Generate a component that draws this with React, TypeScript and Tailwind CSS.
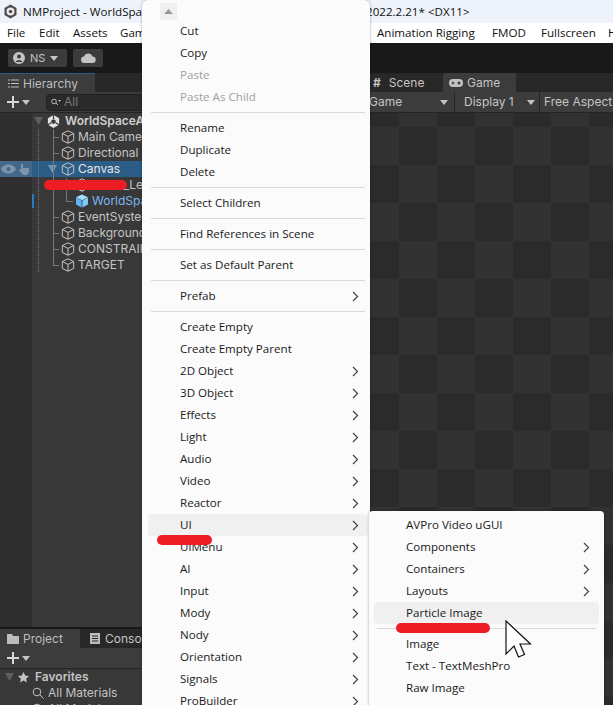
import React from "react";

const Chevron = ({ className = "" }: { className?: string }) => (
  <svg width="7" height="11" viewBox="0 0 7 11" className={className} fill="none" stroke="#444" strokeWidth="1.2">
    <path d="M1 1l4.5 4.5L1 10" />
  </svg>
);

const Cube = ({ blue = false }: { blue?: boolean }) =>
  blue ? (
    <svg width="14" height="14" viewBox="0 0 14 14" className="shrink-0">
      <path d="M7 .5l6 2.8L7 6.2 1 3.3z" fill="#a8dcff" />
      <path d="M1 3.6l5.6 2.9v7L1 10.6z" fill="#5cb8f4" />
      <path d="M13 3.6L7.4 6.5v7l5.6-2.9z" fill="#7ccbfb" />
    </svg>
  ) : (
    <svg width="14" height="14" viewBox="0 0 14 14" className="shrink-0" fill="none" stroke="#c2c2c2" strokeWidth="1">
      <path d="M7 .8l5.7 2.7v7L7 13.2l-5.7-2.7v-7z" />
      <path d="M1.300 3.500L7 6.400l5.700-2.900M7 6.400v6.800" />
    </svg>
  );

const Tri = ({ c = "#5f5f5f" }: { c?: string }) => (
  <svg width="9" height="8" viewBox="0 0 9 8" className="shrink-0">
    <path d="M0 0h9L4.500 8z" fill={c} />
  </svg>
);

const Caret = () => (
  <svg width="8" height="5" viewBox="0 0 8 5" className="shrink-0">
    <path d="M0 0h8L4 5z" fill="#c4c4c4" />
  </svg>
);

const Plus = () => (
  <svg width="12" height="12" viewBox="0 0 12 12" className="shrink-0">
    <path d="M5 0h2v5h5v2H7v5H5V7H0V5h5z" fill="#d8d8d8" />
  </svg>
);

const UnityBall = () => (
  <svg width="13" height="13" viewBox="0 0 13 13" className="shrink-0">
    <path d="M6.500 0l5.600 3.200v6.600L6.500 13 .9 9.800V3.200z" fill="#e2e2e2" />
    <path d="M6.500 4.200l2.200 1.200v2.400L6.500 9 4.300 7.800V5.400z" fill="#3a3a3a" />
    <path d="M6.500 0v4.200M.9 9.800l3.400-2M12.100 9.800l-3.400-2" stroke="#3a3a3a" strokeWidth="1.200" />
  </svg>
);

type Item = { t?: string; sub?: boolean; off?: boolean; hl?: boolean; sep?: boolean };

const mainItems: Item[] = [
  { t: "Cut" }, { t: "Copy" }, { t: "Paste", off: true }, { t: "Paste As Child", off: true }, { sep: true },
  { t: "Rename" }, { t: "Duplicate" }, { t: "Delete" }, { sep: true },
  { t: "Select Children" }, { sep: true },
  { t: "Find References in Scene" }, { sep: true },
  { t: "Set as Default Parent" }, { sep: true },
  { t: "Prefab", sub: true }, { sep: true },
  { t: "Create Empty" }, { t: "Create Empty Parent" },
  { t: "2D Object", sub: true }, { t: "3D Object", sub: true }, { t: "Effects", sub: true }, { t: "Light", sub: true },
  { t: "Audio", sub: true }, { t: "Video", sub: true }, { t: "Reactor", sub: true },
  { t: "UI", sub: true, hl: true }, { t: "UiMenu", sub: true }, { t: "AI", sub: true }, { t: "Input", sub: true },
  { t: "Mody", sub: true }, { t: "Nody", sub: true }, { t: "Orientation", sub: true }, { t: "Signals", sub: true },
  { t: "ProBuilder", sub: true },
];

const subItems: Item[] = [
  { t: "AVPro Video uGUI" }, { t: "Components", sub: true }, { t: "Containers", sub: true }, { t: "Layouts", sub: true },
  { t: "Particle Image", hl: true }, { sep: true },
  { t: "Image" }, { t: "Text - TextMeshPro" }, { t: "Raw Image" }, { t: "Toggle" },
];

const MenuRows = ({ items, textPad, arrowPad }: { items: Item[]; textPad: string; arrowPad: string }) => (
  <>
    {items.map((it, i) =>
      it.sep ? (
        <div key={i} className="h-[9px] shrink-0 flex items-center mx-[3px]">
          <div className="h-px w-full bg-[#d9d9d9]" />
        </div>
      ) : (
        <div key={i} className={`h-[22px] shrink-0 flex items-center justify-between rounded-[4px] ${textPad} ${arrowPad} ${it.hl ? "bg-[#f0f0f0]" : ""}`}>
          <span className={it.off ? "text-[#a0a0a0]" : "text-[#1a1a1a]"}>{it.t}</span>
          {it.sub && <Chevron />}
        </div>
      )
    )}
  </>
);

const tree: { t: string; pad: string; hl?: boolean; blue?: boolean; l2?: boolean }[] = [
  { t: "Main Camera", pad: "pl-[61px]" },
  { t: "Directional Light", pad: "pl-[61px]" },
  { t: "Canvas", pad: "pl-[61px]", hl: true },
  { t: "Panel_Legacy", pad: "pl-[75px]", l2: true },
  { t: "WorldSpace", pad: "pl-[75px]", blue: true, l2: true },
  { t: "EventSystem", pad: "pl-[61px]" },
  { t: "Background", pad: "pl-[61px]" },
  { t: "CONSTRAINT", pad: "pl-[61px]" },
  { t: "TARGET", pad: "pl-[61px]" },
];

const Mark = ({ className }: { className: string }) => (
  <div className={`absolute rounded-full bg-[#ee1c25] ${className}`} />
);

export default function App() {
  return (
    <div className="relative w-[613px] h-[705px] overflow-hidden bg-[#191919] text-[11.6px] font-['Open_Sans','Liberation_Sans',sans-serif]">
      {/* title bar */}
      <div className="h-[23px] bg-[#eef3fb] flex items-center pl-[3px] text-[11.6px] text-[#111] whitespace-nowrap">
        <svg width="15" height="15" viewBox="0 0 15 15" className="shrink-0 mr-[5px]">
          <path d="M7.500 .5l6 3.400v7.200l-6 3.400-6-3.400V3.900z" fill="#4a4a4a" />
          <circle cx="7.500" cy="7.500" r="4" fill="#e8e8e8" />
          <circle cx="7.500" cy="7.500" r="1.600" fill="#3a3a3a" />
        </svg>
        <span className="w-[343px]">NMProject - WorldSpace</span>
        <span>2022.2.21* &lt;DX11&gt;</span>
      </div>
      {/* menu bar */}
      <div className="h-[20px] bg-white flex items-center overflow-hidden text-[11.6px] text-[#111] whitespace-nowrap">
        <span className="ml-[7px] w-[32px] shrink-0">File</span>
        <span className="w-[34px] shrink-0">Edit</span>
        <span className="w-[47px] shrink-0">Assets</span>
        <span className="w-[257px] shrink-0">GameObject</span>
        <span className="w-[115px] shrink-0">Animation Rigging</span>
        <span className="w-[49px] shrink-0">FMOD</span>
        <span className="w-[67px] shrink-0">Fullscreen</span>
        <span className="shrink-0">Help</span>
      </div>
      {/* toolbar */}
      <div className="h-[30px] bg-[#191919] flex items-center pl-[8px] gap-[6px] font-['Inter',sans-serif]">
        <div className="w-[59px] h-[18px] bg-[#3c3c3c] rounded-[2px] flex items-center pl-[5px] gap-[5px] text-[#c4c4c4]">
          <svg width="12" height="12" viewBox="0 0 12 12" className="shrink-0">
            <circle cx="6" cy="6" r="6" fill="#c4c4c4" />
            <circle cx="6" cy="4.500" r="2" fill="#3c3c3c" />
            <path d="M2.500 10c.5-2.400 6.500-2.400 7 0z" fill="#3c3c3c" />
          </svg>
          <span className="text-[11px]">NS</span>
          <Caret />
        </div>
        <div className="w-[30px] h-[18px] bg-[#3c3c3c] rounded-[2px] flex items-center justify-center">
          <svg width="15" height="10" viewBox="0 0 15 10"><path d="M3.500 10a3.200 3.200 0 0 1-.4-6.400A4.400 4.400 0 0 1 11.500 3.600 3.200 3.200 0 0 1 11.500 10z" fill="#c4c4c4" /></svg>
        </div>
      </div>
      {/* panels */}
      <div className="flex h-[632px] font-['Inter',sans-serif] text-[12px] text-[#c4c4c4]">
        {/* left column */}
        <div className="w-[358px] shrink-0 flex flex-col mr-[2px]">
          <div className="h-[19px] shrink-0 bg-[#282828] flex items-end">
            <div className="w-[95px] h-[19px] bg-[#3c3c3c] border-t border-[#2c5d87] flex items-center pl-[8px] pt-[1px] gap-[4px] text-[#bdbdbd]">
              <svg width="11" height="9" viewBox="0 0 11 9" stroke="#bdbdbd" strokeWidth="1" fill="none"><path d="M0 1h2M3 1h8M0 4.500h2M3 4.500h8M0 8h2M3 8h8" /></svg>
              <span>Hierarchy</span>
            </div>
          </div>
          <div className="h-[21px] shrink-0 bg-[#3c3c3c] border-b border-[#242424] flex items-center pl-[7px] gap-[3px]">
            <Plus />
            <Caret />
            <div className="ml-[13px] flex-1 h-[17px] bg-[#2a2a2a] rounded-[4px] border border-[#212121] flex items-center pl-[4px] gap-[3px] text-[#7a7a7a]">
              <svg width="10" height="9" viewBox="0 0 10 9" fill="none" stroke="#bdbdbd"><circle cx="3" cy="3.500" r="2.300" /><path d="M5 5l2 2" /><path d="M7 2h3L8.500 4z" fill="#bdbdbd" stroke="none" /></svg>
              <span>All</span>
            </div>
          </div>
          <div className="relative h-[514px] shrink-0 bg-[#383838] flex">
            <div className="w-[32px] shrink-0 bg-[#2e2e2e]" />
            <div className="flex-1 -ml-[32px]">
              <div className="h-[16px] flex items-center pl-[34px] gap-[4px] relative">
                <Tri />
                <UnityBall />
                <span className="font-semibold text-[#cfcfcf] ml-[1px]">WorldSpaceAR</span>
              </div>
              {tree.map((r) => (
                <div key={r.t} className={`relative h-[16px] flex items-center gap-[3px] ${r.pad} ${r.hl ? "bg-[#2c5d87] text-[#e6e6e6]" : ""}`}>
                  {r.hl && (
                    <div className="absolute left-0 top-0 w-[32px] h-[16px] bg-[#44688c] flex items-center pl-[1px] gap-[2px]">
                      <svg width="15" height="10" viewBox="0 0 15 10"><path d="M0 5c3-6 12-6 15 0-3 6-12 6-15 0z" fill="#7d94ab" /><circle cx="7.500" cy="5" r="2" fill="#44688c" /></svg>
                      <svg width="12" height="12" viewBox="0 0 12 12"><path d="M3 1h2v4h6v4l-2 3H5L1 7l1-1 1 1z" fill="#7d94ab" /></svg>
                    </div>
                  )}
                  {r.hl && <div className="absolute left-[48px] top-[4px]"><Tri c="#6f97b8" /></div>}
                  {r.blue && <div className="absolute left-[32px] top-[1px] w-[2px] h-[14px] bg-[#1f7fc0]" />}
                  {!r.l2 && !r.hl && <div className="absolute left-[53px] top-[8px] w-[6px] h-px bg-[#777]" />}
                  {r.l2 && <div className="absolute left-[66px] top-[8px] w-[7px] h-px bg-[#777]" />}
                  <Cube blue={r.blue} />
                  <span className={r.blue ? "text-[#7cb4f0]" : ""}>{r.t}</span>
                </div>
              ))}
            </div>
            {/* tree guides */}
            <div className="absolute left-[38px] top-[16px] h-[143px] border-l border-dotted border-[#777]" />
            <div className="absolute left-[53px] top-[16px] h-[136px] border-l border-[#777]" />
            <div className="absolute left-[66px] top-[65px] h-[24px] border-l border-[#777]" />
          </div>
          <div className="h-[2px] shrink-0 bg-[#191919]" />
          <div className="h-[19px] shrink-0 bg-[#282828] flex">
            <div className="w-[80px] bg-[#3c3c3c] flex items-center pl-[7px] gap-[4px] text-[#bdbdbd]">
              <svg width="12" height="10" viewBox="0 0 12 10"><path d="M0 0h5l1 2h6v8H0z" fill="#bdbdbd" /></svg>
              <span>Project</span>
            </div>
            <div className="flex items-center pl-[10px] gap-[5px]">
              <svg width="10" height="11" viewBox="0 0 10 11"><path d="M0 0h10v11H0z" fill="#bdbdbd" /><path d="M2 3h6M2 5.500h6M2 8h6" stroke="#282828" /></svg>
              <span>Console</span>
            </div>
          </div>
          <div className="h-[21px] shrink-0 bg-[#3c3c3c] border-b border-[#242424] flex items-center pl-[7px] gap-[3px]">
            <Plus />
            <Caret />
          </div>
          <div className="flex-1 min-h-0 overflow-hidden bg-[#383838]">
            <div className="h-[16px] flex items-center pl-[5px] gap-[4px]">
              <Tri />
              <svg width="11" height="11" viewBox="0 0 11 11"><path d="M5.500 0l1.700 3.600 3.800.5-2.800 2.600.7 3.800-3.400-1.900-3.400 1.900.7-3.800L0 4.100l3.800-.5z" fill="#c4c4c4" /></svg>
              <span className="font-semibold ml-[2px]">Favorites</span>
            </div>
            <div className="h-[16px] flex items-center pl-[32px] gap-[4px]">
              <svg width="12" height="12" viewBox="0 0 12 12" fill="none" stroke="#c4c4c4"><circle cx="5" cy="5" r="3.800" /><path d="M8 8l3.500 3.500" /></svg>
              <span>All Materials</span>
            </div>
            <div className="h-[16px] flex items-center pl-[32px] gap-[4px]">
              <svg width="12" height="12" viewBox="0 0 12 12" fill="none" stroke="#c4c4c4"><circle cx="5" cy="5" r="3.800" /><path d="M8 8l3.500 3.500" /></svg>
              <span>All Models</span>
            </div>
          </div>
        </div>
        {/* right column */}
        <div className="flex-1 min-w-0 flex flex-col">
          <div className="h-[19px] bg-[#282828] flex pt-[1px]">
            <div className="w-[83px] flex items-center pl-[13px] gap-[8px]">
              <span className="text-[12px] font-bold">#</span>
              <span>Scene</span>
            </div>
            <div className="w-[73px] bg-[#3c3c3c] flex items-center pl-[6px] gap-[4px] rounded-t-[2px] -mt-[1px] pt-[1px]">
              <svg width="14" height="8" viewBox="0 0 14 8"><rect width="14" height="8" rx="4" fill="#c4c4c4" /><circle cx="10" cy="4" r="1.500" fill="#3c3c3c" /><path d="M2.500 4h3M4 2.500v3" stroke="#3c3c3c" /></svg>
              <span>Game</span>
            </div>
          </div>
          <div className="h-[21px] bg-[#3c3c3c] border-b border-[#242424] flex items-center whitespace-nowrap overflow-hidden">
            <div className="w-[95px] shrink-0 h-full flex items-center justify-between pl-[9px] pr-[6px] border-r border-[#242424]">
              <span>Game</span>
              <Caret />
            </div>
            <div className="w-[85px] shrink-0 h-full flex items-center justify-between pl-[9px] pr-[4px] border-r border-[#242424]">
              <span>Display 1</span>
              <Caret />
            </div>
            <span className="pl-[4px]">Free Aspect</span>
          </div>
          <div className="flex-1 bg-[conic-gradient(#2b2b2b_25%,#323232_0_50%,#2b2b2b_0_75%,#323232_0)] bg-[length:76px_76px] bg-[position:1px_14px]" />
        </div>
      </div>

      {/* main context menu */}
      <div className="absolute left-[142px] top-0 w-[228px] h-[725px] bg-[#fbfbfb] rounded-[6px] shadow-[0_0_3px_rgba(0,0,0,0.35)] pl-[6px] pr-[2px] flex flex-col">
        <div className="h-[20px] shrink-0 pl-[12px] flex items-start pt-[3px]">
          <div className="w-[17px] h-[17px] bg-[#f0f0f0] flex items-center justify-center">
            <svg width="9" height="5" viewBox="0 0 9 5"><path d="M4.500 0L9 5H0z" fill="#9a9a9a" /></svg>
          </div>
        </div>
        <MenuRows items={mainItems} textPad="pl-[32px]" arrowPad="pr-[9px]" />
      </div>

      {/* submenu */}
      <div className="absolute left-[369px] top-[511px] w-[235px] h-[214px] bg-[#fbfbfb] rounded-[4px] shadow-[0_0_3px_rgba(0,0,0,0.35)] pt-[3px] px-[5px] flex flex-col">
        <MenuRows items={subItems} textPad="pl-[32px]" arrowPad="pr-[9px]" />
      </div>

      {/* red marks */}
      <Mark className="left-[44px] top-[180px] w-[83px] h-[10px]" />
      <Mark className="left-[157px] top-[535px] w-[55px] h-[10px]" />
      <Mark className="left-[396px] top-[623px] w-[94px] h-[10px]" />

      {/* mouse cursor */}
      <svg width="27" height="38" viewBox="0 0 27 38" className="absolute left-[505px] top-[620px]">
        <path d="M1 1v33l8-8 4.500 11 6-2.500L15 24h10.500z" fill="#fff" stroke="#111" strokeWidth="1.200" />
      </svg>
    </div>
  );
}
